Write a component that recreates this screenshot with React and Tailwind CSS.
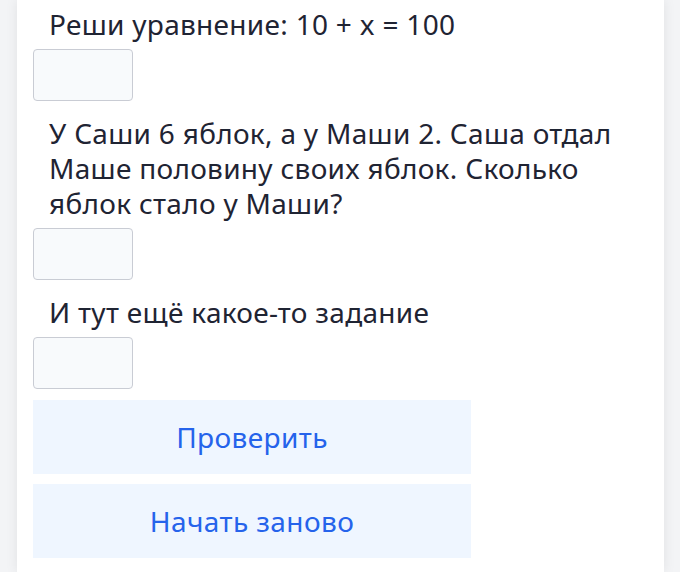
import React, { useState } from 'react';

const tasks = [
    { id: 1, text: "Реши уравнение: 10 + x = 100" },
    { id: 2, text: "У Саши 6 яблок, а у Маши 2. Саша отдал Маше половину своих яблок. Сколько яблок стало у Маши?" },
    { id: 3, text: "И тут ещё какое-то задание" },
];

export default function App() {
    const [answers, setAnswers] = useState({});

    const handleChange = (id, value) => {
        setAnswers((prev) => ({ ...prev, [id]: value }));
    };

    return (
        <div className="min-h-screen bg-[#f3f4f6] font-['Noto_Sans',sans-serif]">
            <div className="ml-[17px] w-[647px] min-h-[572px] bg-white shadow-[0_0_12px_rgba(0,0,0,0.08)] px-4 pt-[7px]">
                <div className="flex flex-col gap-[15px]">
                    {tasks.map((task) => (
                        <div key={task.id} className="flex flex-col gap-[7px]">
                            <p className="px-4 text-[28px] leading-[35px] tracking-[0.3px] text-[#1f2433]">
                                {task.text}
                            </p>
                            <input
                                type="text"
                                value={answers[task.id] || ""}
                                onChange={(e) => handleChange(task.id, e.target.value)}
                                className="w-[100px] h-[52px] bg-[#f8fafc] border border-[#c9ccd4] rounded-sm px-2 text-[24px] focus:outline-none"
                            />
                        </div>
                    ))}
                </div>

                <div className="mt-[11px] flex flex-col gap-[10px] w-[438px]">
                    <button className="h-[74px] bg-[#eff6ff] text-[#2563eb] text-[28px] tracking-[0.4px]">
                        Проверить
                    </button>
                    <button className="h-[74px] bg-[#eff6ff] text-[#2563eb] text-[28px] tracking-[0.4px]">
                        Начать заново
                    </button>
                </div>
            </div>
        </div>
    );
}
